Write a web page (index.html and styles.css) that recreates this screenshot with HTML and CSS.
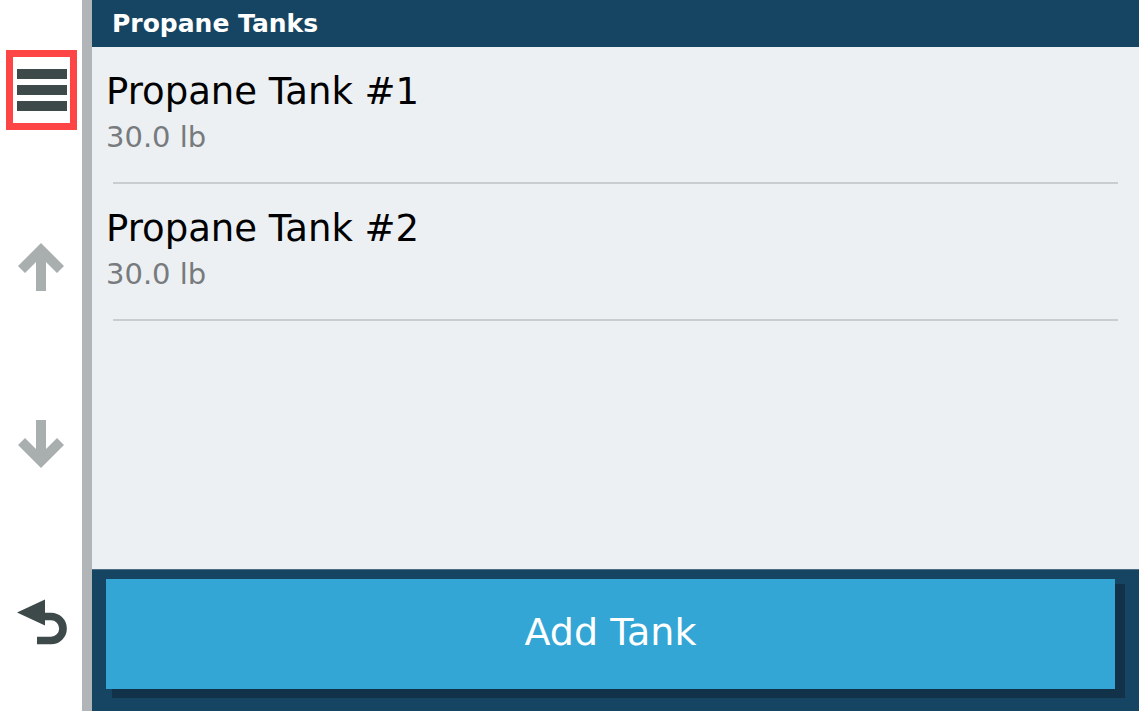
FILE: index.html
```html
<!DOCTYPE html>
<html>
<head>
<meta charset="utf-8">
<link rel="stylesheet" href="styles.css">
</head>
<body>
<div class="screen">
  <nav class="sidebar">
    <div class="slot">
      <div class="menu-btn">
        <span class="bar"></span><span class="bar"></span><span class="bar"></span>
      </div>
    </div>
    <div class="slot">
      <svg class="arrow" viewBox="17 243 48 48" width="48" height="48">
        <polygon points="41,243 64,266 57,273 46,262 46,291 36,291 36,262 25,273 18,266" fill="#a9afae"/>
      </svg>
    </div>
    <div class="slot">
      <svg class="arrow" viewBox="17 421 48 48" width="48" height="48">
        <polygon points="41,469 64,446 57,439 46,450 46,421 36,421 36,450 25,439 18,446" fill="#a9afae"/>
      </svg>
    </div>
    <div class="slot">
      <svg class="undo" viewBox="6 590 70 65" width="70" height="65">
        <polygon points="17,612.5 45,599.5 45,625.5" fill="#3d4a49"/>
        <path d="M43 616.5 H51 A12 12 0 0 1 51 640.5 H37" fill="none" stroke="#3d4a49" stroke-width="7.7"/>
      </svg>
    </div>
  </nav>
  <div class="divider"></div>
  <main class="main">
    <header class="title-bar">Propane Tanks</header>
    <section class="list">
      <div class="item">
        <div class="item-name">Propane Tank #1</div>
        <div class="item-sub">30.0 lb</div>
      </div>
      <div class="sep"></div>
      <div class="item">
        <div class="item-name">Propane Tank #2</div>
        <div class="item-sub">30.0 lb</div>
      </div>
      <div class="sep"></div>
    </section>
    <footer class="footer">
      <button class="add-btn">Add Tank</button>
    </footer>
  </main>
</div>
</body>
</html>
```

FILE: styles.css
```css
html, body {
  margin: 0;
  padding: 0;
  background: #ffffff;
}
body {
  font-family: "DejaVu Sans", "Liberation Sans", sans-serif;
}
.screen {
  display: flex;
  width: 1139px;
  height: 711px;
  overflow: hidden;
}
.sidebar {
  width: 82px;
  flex: 0 0 82px;
  display: flex;
  flex-direction: column;
  background: #ffffff;
}
.slot {
  flex: 1;
  display: flex;
  align-items: center;
  justify-content: center;
}
.menu-btn {
  box-sizing: border-box;
  width: 71px;
  height: 80px;
  border: 7px solid #fd4545;
  display: flex;
  flex-direction: column;
  align-items: center;
  justify-content: center;
  gap: 6px;
  margin-top: 2px;
  margin-left: 1px;
}
.bar {
  display: block;
  width: 50px;
  height: 10px;
  background: #3d4a49;
}
.arrow, .undo {
  display: block;
}
.divider {
  width: 10px;
  flex: 0 0 10px;
  background: #b1b5b7;
}
.main {
  flex: 1;
  display: flex;
  flex-direction: column;
  background: #ecf0f3;
}
.title-bar {
  height: 47px;
  line-height: 47px;
  background: #164563;
  color: #ffffff;
  font-weight: bold;
  font-size: 25px;
  padding-left: 20px;
}
.list {
  flex: 1;
}
.item {
  padding: 23px 14px 28px;
}
.item-name {
  font-size: 37px;
  line-height: 43px;
  color: #000000;
}
.item-sub {
  font-size: 29px;
  line-height: 34px;
  margin-top: 7px;
  color: #777b7d;
}
.sep {
  height: 2px;
  margin: 0 21px;
  background: #c9cdcf;
}
.footer {
  height: 142px;
  box-sizing: border-box;
  background: #164563;
  border-top: 1px solid #4b6e85;
  padding: 9px 24px 22px 14px;
  display: flex;
}
.add-btn {
  flex: 1;
  border: none;
  margin: 0;
  background: #33a6d5;
  color: #ffffff;
  font-family: "DejaVu Sans", "Liberation Sans", sans-serif;
  font-size: 38px;
  line-height: 44px;
  padding: 0 0 4px;
  box-shadow: 8px 7px 0 2px #12324a;
}
```
